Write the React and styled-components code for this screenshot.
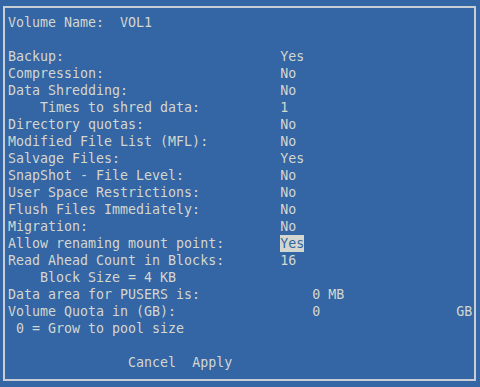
import React from 'react'
import styled, { createGlobalStyle } from 'styled-components'

const GlobalStyle = createGlobalStyle`
  html, body {
    margin: 0;
    padding: 0;
    background: #3465a4;
  }
  body {
    font-family: "DejaVu Sans Mono", "Liberation Mono", monospace;
    font-size: 13.3px;
    color: #d3d7cf;
  }
`

const Screen = styled.div`
  width: 480px;
  height: 387px;
  background: #3465a4;
  padding: 6px 0 0 3px;
  box-sizing: border-box;
  overflow: hidden;
`

const Panel = styled.div`
  width: 473px;
  height: 375px;
  box-sizing: border-box;
  border: 2px solid #c9ced6;
  padding: 6px 0 0 3px;
  display: flex;
  flex-direction: column;
`

const Row = styled.div`
  display: flex;
  height: 17px;
  line-height: 17px;
  white-space: pre;
`

const Label = styled.span`
  width: ${p => p.$width || 34}ch;
  padding-left: ${p => p.$indent || 0}ch;
  box-sizing: border-box;
  flex: none;
`

const Value = styled.span`
  flex: none;
  width: ${p => (p.$width ? `${p.$width}ch` : 'auto')};
  background: ${p => (p.$active ? '#d3d7cf' : 'transparent')};
  color: ${p => (p.$active ? '#3465a4' : 'inherit')};
`

const Buttons = styled(Row)`
  padding-left: 15ch;
  gap: 2ch;
`

const settings = [
  { label: 'Backup:', value: 'Yes' },
  { label: 'Compression:', value: 'No' },
  { label: 'Data Shredding:', value: 'No' },
  { label: 'Times to shred data:', value: '1', indent: 4 },
  { label: 'Directory quotas:', value: 'No' },
  { label: 'Modified File List (MFL):', value: 'No' },
  { label: 'Salvage Files:', value: 'Yes' },
  { label: 'SnapShot - File Level:', value: 'No' },
  { label: 'User Space Restrictions:', value: 'No' },
  { label: 'Flush Files Immediately:', value: 'No' },
  { label: 'Migration:', value: 'No' },
  { label: 'Allow renaming mount point:', value: 'Yes', active: true },
  { label: 'Read Ahead Count in Blocks:', value: '16' },
]

export default function App() {
  return (
    <>
      <GlobalStyle />
      <Screen>
        <Panel>
          <Row>Volume Name:  VOL1</Row>
          <Row />
          {settings.map(s => (
            <Row key={s.label}>
              <Label $indent={s.indent}>{s.label}</Label>
              <Value $active={s.active}>{s.value}</Value>
            </Row>
          ))}
          <Row>
            <Label $indent={4}>Block Size = 4 KB</Label>
          </Row>
          <Row>
            <Label $width={38}>Data area for PUSERS is:</Label>
            <Value>0 MB</Value>
          </Row>
          <Row>
            <Label $width={38}>Volume Quota in (GB):</Label>
            <Value $width={18}>0</Value>
            <Value>GB</Value>
          </Row>
          <Row>
            <Label $indent={1}>0 = Grow to pool size</Label>
          </Row>
          <Row />
          <Buttons>
            <span>Cancel</span>
            <span>Apply</span>
          </Buttons>
        </Panel>
      </Screen>
    </>
  )
}
